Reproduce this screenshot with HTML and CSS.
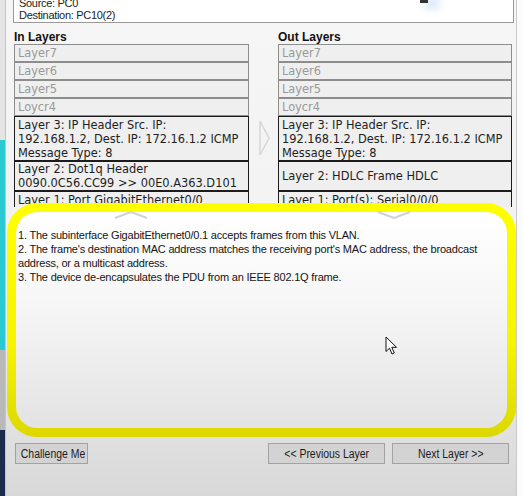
FILE: index.html
```html
<!DOCTYPE html>
<html>
<head>
<meta charset="utf-8">
<link rel="stylesheet" href="styles.css">
</head>
<body>
  <div class="desk">
    <div class="dk-top"></div>
    <div class="dk-cyan"></div>
    <div class="dk-gray"></div>
    <div class="dk-navy"></div>
  </div>
  <div class="win">
    <div class="src">
      <div>Source: PC0</div>
      <div>Destination: PC10(2)</div>
      <span class="blip"></span>
    </div>
    <div class="layers-clip">
      <div class="layers">
        <div class="head">In Layers</div>
        <div class="mid"></div>
        <div class="head">Out Layers</div>

        <div class="lb dim">Layer7</div>
        <div class="mid"></div>
        <div class="lb dim">Layer7</div>

        <div class="lb dim">Layer6</div>
        <div class="mid"></div>
        <div class="lb dim">Layer6</div>

        <div class="lb dim">Layer5</div>
        <div class="mid"></div>
        <div class="lb dim">Layer5</div>

        <div class="lb dim">Loycr4</div>
        <div class="mid"></div>
        <div class="lb dim">Loycr4</div>

        <div class="lb on l3">Layer 3: IP Header Src. IP:<br>192.168.1.2, Dest. IP: 172.16.1.2 ICMP<br>Message Type: 8</div>
        <div class="mid arrow">
          <svg width="11" height="36" viewBox="0 0 11 36"><polygon points="1,1 10,18 1,35" fill="none" stroke="#d6d6d6" stroke-width="1.5"/></svg>
        </div>
        <div class="lb on l3">Layer 3: IP Header Src. IP:<br>192.168.1.2, Dest. IP: 172.16.1.2 ICMP<br>Message Type: 8</div>

        <div class="lb on l2">Layer 2: Dot1q Header<br>0090.0C56.CC99 &gt;&gt; 00E0.A363.D101</div>
        <div class="mid"></div>
        <div class="lb on l2">Layer 2: HDLC Frame HDLC</div>

        <div class="lb on l1">Layer 1: Port GigabitEthernet0/0</div>
        <div class="mid"></div>
        <div class="lb on l1">Layer 1: Port(s): Serial0/0/0</div>
      </div>
    </div>
    <div class="ring">
      <svg class="chev up" width="34" height="8" viewBox="0 0 34 8"><polyline points="1,7 17,1 33,7" fill="none" stroke="#d2d2d2" stroke-width="2"/></svg>
      <svg class="chev down" width="34" height="8" viewBox="0 0 34 8"><polyline points="1,1 17,7 33,1" fill="none" stroke="#d2d2d2" stroke-width="2"/></svg>
      <p class="desc">1. The subinterface GigabitEthernet0/0.1 accepts frames from this VLAN.<br>2. The frame's destination MAC address matches the receiving port's MAC address, the broadcast address, or a multicast address.<br>3. The device de-encapsulates the PDU from an IEEE 802.1Q frame.</p>
      <svg class="cursor" width="13" height="20" viewBox="0 0 13 20"><path d="M1 1 L1 15.5 L4.5 12.2 L7 18 L9.3 17 L6.8 11.3 L11.5 11.3 Z" fill="#fff" stroke="#111" stroke-width="1" stroke-linejoin="round"/></svg>
    </div>
    <div class="btns">
      <button class="btn"><span>Challenge Me</span></button>
      <div class="btn-pair">
        <button class="btn wide"><span>&lt;&lt; Previous Layer</span></button>
        <button class="btn wide"><span>Next Layer &gt;&gt;</span></button>
      </div>
    </div>
  </div>
  <div class="rstrip"></div>
</body>
</html>
```

FILE: styles.css
```css
html, body {
  margin: 0;
  padding: 0;
}
body {
  width: 523px;
  height: 496px;
  overflow: hidden;
  display: flex;
  font-family: "Liberation Sans", Arial, sans-serif;
  background: #fafafa;
}
.desk {
  width: 5px;
  display: flex;
  flex-direction: column;
}
.dk-top { height: 140px; background: #e4e4e4; }
.dk-cyan { height: 210px; background: #2bc9d2; }
.dk-gray { height: 80px; background: #b9b9b9; }
.dk-navy { flex: 1; background: #1c2b4e; }

.win {
  width: 512px;
  flex: none;
  box-sizing: border-box;
  border-left: 1px solid #c4c4c4;
  border-right: 1px solid #c9c9c9;
  padding-left: 8px;
  display: flex;
  flex-direction: column;
  background: linear-gradient(180deg, #f6f6f6 0%, #f2f2f2 50%, #e2e2e2 85%, #d8d8d8 100%);
}
.rstrip {
  flex: 1;
  background: #fbfbfb;
}

.src {
  position: relative;
  margin: -4px 0 0 -1px;
  width: 501px;
  box-sizing: border-box;
  background: #fff;
  border: 1px solid #9a9a9a;
  padding: 0 5px 1px 5px;
  font-size: 11px;
  line-height: 12px;
  color: #222;
  letter-spacing: -0.3px;
}
.blip {
  position: absolute;
  left: 406px;
  top: 3px;
  width: 8px;
  height: 3px;
  background: #333;
  box-shadow: 8px 2px 8px 3px rgba(120, 170, 230, 0.35);
}

.layers-clip {
  height: 176px;
  overflow: hidden;
  margin-top: 8px;
}
.layers {
  display: grid;
  grid-template-columns: 235px 29px 234px;
}
.head {
  font-weight: bold;
  font-size: 12px;
  line-height: 13px;
  color: #111;
}
.mid {
  display: flex;
  align-items: center;
  justify-content: center;
}
.arrow {
  justify-content: flex-start;
  padding-left: 10px;
  align-items: flex-start;
  padding-top: 4px;
}
.lb {
  box-sizing: border-box;
  font-family: "DejaVu Sans", Verdana, sans-serif;
  font-size: 11.4px;
  line-height: 14px;
  background: #efefef;
  display: flex;
  align-items: center;
  padding: 0 3px;
  white-space: nowrap;
}
.dim {
  height: 18px;
  border: 1px solid #8d8d8d;
  color: #9a9a9a;
}
.on {
  border: 1px solid #1c1c1c;
  color: #1e1e1e;
}
.l3 { height: 45px; }
.l2 { height: 30px; }
.l1 { height: 30px; align-items: flex-start; padding-top: 1px; }

.ring {
  position: relative;
  margin: -4px 0 0 -7px;
  width: 509px;
  height: 234px;
  box-sizing: border-box;
  border: 9px solid transparent;
  border-radius: 30px;
  background:
    linear-gradient(180deg, #ffffff 0%, #f7f7f7 40%, #e3e3e3 100%) padding-box,
    linear-gradient(180deg, #ffff00 0%, #f6f400 60%, #dcd800 100%) border-box;
}
.chev {
  position: absolute;
  top: -1px;
}
.chev.up { left: 98px; }
.chev.down { left: 361px; }
.desc {
  margin: 0;
  padding: 16px 10px 0 2px;
  font-size: 11px;
  line-height: 14px;
  letter-spacing: -0.2px;
  color: #151515;
}
.cursor {
  position: absolute;
  left: 369px;
  top: 124px;
}

.btns {
  margin-top: 6px;
  display: flex;
  justify-content: space-between;
  padding-right: 7px;
}
.btn-pair {
  display: flex;
  gap: 7px;
}
.btn {
  margin: 0 0 0 1px;
  height: 21px;
  width: 73px;
  padding: 0;
  box-sizing: border-box;
  background: #d3d3d3;
  border: 1px solid #a2a2a2;
  border-radius: 0;
  font-family: "Liberation Sans", Arial, sans-serif;
  font-size: 12px;
  color: #1b1b1b;
  text-align: center;
  white-space: nowrap;
}
.btn span {
  display: inline-block;
  transform: scaleX(0.87);
}
.btn.wide {
  width: 117px;
  margin: 0;
}
```
